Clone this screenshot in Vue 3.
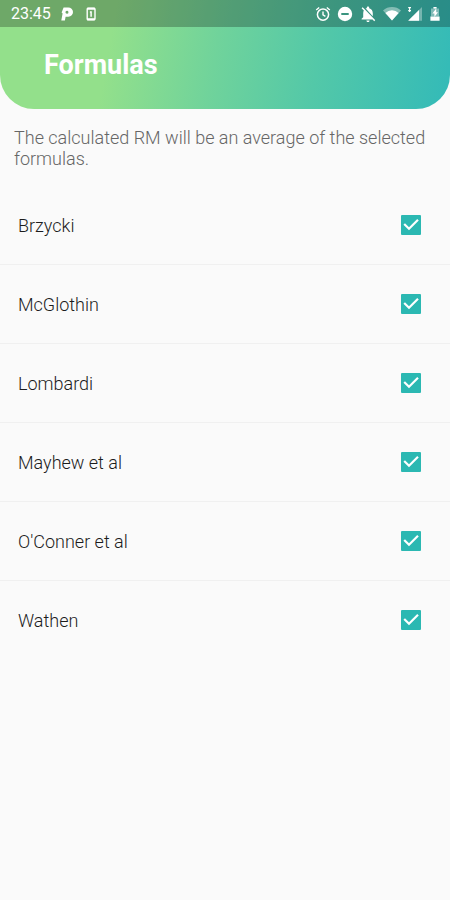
<script setup>
import { ref } from 'vue'

const formulas = ref([
  { id: 'brzycki', name: 'Brzycki', selected: true },
  { id: 'mcglothin', name: 'McGlothin', selected: true },
  { id: 'lombardi', name: 'Lombardi', selected: true },
  { id: 'mayhew', name: 'Mayhew et al', selected: true },
  { id: 'oconner', name: "O'Conner et al", selected: true },
  { id: 'wathen', name: 'Wathen', selected: true },
])
</script>

<template>
  <div class="screen">
    <header class="header">
      <div class="status">
        <div class="status-left">
          <span class="clock">23:45</span>
          <svg class="icon" viewBox="0 0 16 16" aria-hidden="true">
            <path fill="#fff" fill-rule="evenodd" d="M4.6 1.4h4.6a4.7 4.7 0 0 1 .2 9.4H6.6L5.9 14.6H2.3L3.6 7.4 2.6 6.6zM7.9 4.8a1.5 1.5 0 1 0 .1 3 1.5 1.5 0 0 0-.1-3z" />
          </svg>
          <svg class="icon" viewBox="0 0 16 16" aria-hidden="true">
            <rect x="4.2" y="2.2" width="7.8" height="11.6" rx="1" fill="none" stroke="#fff" stroke-width="1.4" />
            <path d="M4 2.8h8M4 13.2h8" stroke="#fff" stroke-width="2" />
            <path d="M8.1 5.2v5.6M6.9 6.1h1.2" fill="none" stroke="#fff" stroke-width="1.5" />
          </svg>
        </div>
        <div class="status-right">
          <svg class="icon" viewBox="0 0 16 16" aria-hidden="true">
            <circle cx="8" cy="8.6" r="5.6" fill="none" stroke="#fff" stroke-width="1.5" />
            <path d="M8 5.4v3.5l2.4 1.5M1.2 4l3-2.5M14.8 4l-3-2.5" fill="none" stroke="#fff" stroke-width="1.4" />
          </svg>
          <svg class="icon" viewBox="0 0 16 16" aria-hidden="true">
            <path fill="#fff" fill-rule="evenodd" d="M8 .8a7.2 7.2 0 1 0 0 14.4A7.2 7.2 0 0 0 8 .8zM4.3 7.1h7.4v1.8H4.3z" />
          </svg>
          <svg class="icon bell" viewBox="2 2 20 20" aria-hidden="true">
            <path fill="#fff" d="M20 18.69 7.84 6.14 5.27 3.49 4 4.76l2.8 2.8v.01c-.52.99-.8 2.16-.8 3.42v5l-2 2v1h13.73l2 2L21 19.72l-1-1.03zM12 22c1.11 0 2-.89 2-2h-4c0 1.11.89 2 2 2zm6-7.32V11c0-3.08-1.64-5.64-4.5-6.32V4c0-.83-.67-1.5-1.5-1.5s-1.5.67-1.5 1.5v.68c-.15.03-.29.08-.42.12-.1.03-.2.07-.3.11h-.01c-.23.1-.46.2-.68.32L18 14.68z" />
          </svg>
          <svg class="icon wifi" viewBox="0 0 18 16" aria-hidden="true">
            <path fill="#fff" fill-opacity=".4" d="M9 14.6 0 4.4a13.4 13.4 0 0 1 18 0z" />
            <path fill="#fff" d="M9 14.6 2.4 7a9.6 9.6 0 0 1 13.2 0z" />
          </svg>
          <svg class="icon" viewBox="0 0 16 16" aria-hidden="true">
            <path fill="#fff" fill-opacity=".35" d="M15 1v13.8H1.2z" />
            <path fill="#fff" d="M12 4v10.8H1.2z" />
            <path d="M2.6 1v5M1.2 1.6h2.8M1.2 4.6h2.8" stroke="#fff" stroke-width="1.1" />
          </svg>
          <svg class="icon battery" viewBox="0 0 12 16" aria-hidden="true">
            <path fill="#fff" fill-opacity=".4" d="M4.5 1h3v1.4H10v8.2H2V2.4h2.5z" />
            <path fill="#fff" d="M1.4 10.6h9.2v4.2H1.4zM4.5 1h3v1.4h-3z" />
            <path fill="#fff" d="M7.2 2.6 3.4 7.6h2V11l3.6-4.8H7.2z" />
          </svg>
        </div>
      </div>
      <h1 class="title">Formulas</h1>
    </header>

    <main>
      <p class="intro">The calculated RM will be an average of the selected formulas.</p>
      <ul class="list">
        <li v-for="formula in formulas" :key="formula.id" class="item">
          <label class="row" :for="formula.id">
            <span>{{ formula.name }}</span>
            <span class="check">
              <input :id="formula.id" v-model="formula.selected" class="box" type="checkbox" />
              <svg v-if="formula.selected" class="tick" viewBox="0 0 20 20" aria-hidden="true">
                <path d="m3.2 9 4.8 4.8 9-9" fill="none" stroke="#fff" stroke-width="2.2" />
              </svg>
            </span>
          </label>
        </li>
      </ul>
    </main>
  </div>
</template>

<style>
body {
  background: #fafafa;
}
</style>

<style scoped>
.screen {
  min-height: 100vh;
  background: #fafafa;
  color: #1c1c1c;
  font-family: Roboto, "Liberation Sans", sans-serif;
}

.header {
  overflow: hidden;
  border-radius: 0 0 34px 34px;
  background: linear-gradient(100deg, #93e08b 0%, #93e08b 25%, #70d39b 48%, #53c8a8 70%, #35bbb7 98%);
}

.status {
  display: flex;
  align-items: center;
  justify-content: space-between;
  height: 27px;
  padding: 0 9px 0 11px;
  box-sizing: border-box;
  background: rgba(0, 0, 0, 0.25);
  color: #fff;
}

.status-left,
.status-right {
  display: flex;
  align-items: center;
}

.status-left {
  gap: 8px;
}

.status-right {
  gap: 6px;
}

.clock {
  font-size: 16px;
  line-height: 27px;
}

.icon {
  display: block;
  width: 16px;
  height: 16px;
}

.bell {
  width: 18px;
}

.wifi {
  width: 18px;
}

.battery {
  width: 12px;
}

.title {
  margin: 0;
  padding: 22px 44px 28px;
  color: #fff;
  font-size: 27px;
  font-weight: 700;
  line-height: 32px;
}

.intro {
  margin: 0;
  padding: 18px 14px 17px;
  color: #666;
  font-size: 18px;
  font-weight: 300;
  line-height: 21px;
}

.list {
  margin: 0;
  padding: 0;
  list-style: none;
}

.item + .item {
  border-top: 1px solid #f0f0f0;
}

.row {
  display: flex;
  align-items: center;
  justify-content: space-between;
  height: 78px;
  padding: 0 29px 0 18px;
  font-size: 18px;
  font-weight: 300;
  line-height: 21px;
}

.check {
  display: grid;
  width: 20px;
  height: 20px;
}

.box,
.tick {
  grid-area: 1 / 1;
  width: 20px;
  height: 20px;
  margin: 0;
}

.box {
  appearance: none;
  border: 2px solid #2bb8b2;
  border-radius: 1px;
}

.box:checked {
  background: #2bb8b2;
}

.tick {
  pointer-events: none;
}
</style>
